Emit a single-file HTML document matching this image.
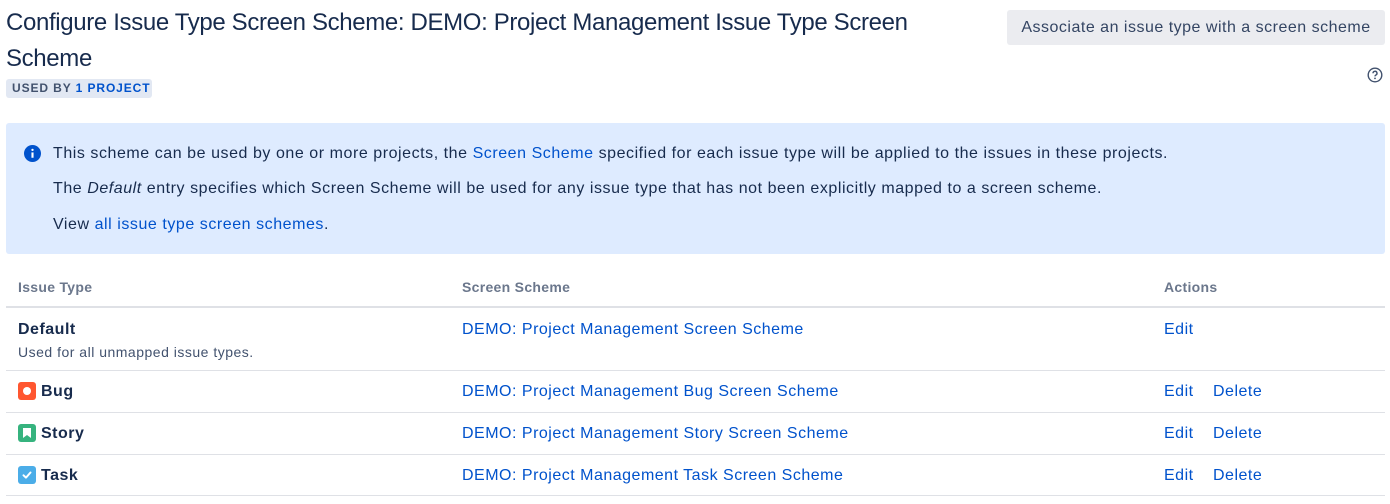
<!DOCTYPE html>
<html><head><meta charset="utf-8"><style>
*{margin:0;padding:0;box-sizing:border-box}
body{width:1390px;height:504px;background:#fff;font-family:"Liberation Sans",Arial,sans-serif;color:#172b4d;position:relative;overflow:hidden;letter-spacing:0.5px}
.a{position:absolute;white-space:nowrap}
a{color:#0052cc;text-decoration:none}
h1{position:absolute;left:6px;top:5px;font-size:24px;font-weight:normal;line-height:36px;color:#172b4d;width:960px;letter-spacing:-0.35px}
.badge{left:6px;top:79px;height:19px;width:146px;background:#e2e8f3;border-radius:3px;font-size:12px;font-weight:bold;color:#42526e;line-height:19px;padding-left:6px;letter-spacing:0.9px}
.btn{left:1007px;top:10px;width:378px;height:35px;background:#ebecf0;border-radius:3px;font-size:16px;line-height:35px;text-align:center;color:#344563}
.info{left:6px;top:123px;width:1379px;height:131px;background:#deebff;border-radius:3px}
.t{font-size:16px;color:#172b4d;letter-spacing:0.55px}
.th{font-size:14px;font-weight:bold;color:#6b778c;top:279px;letter-spacing:0.3px}
.line{position:absolute;left:6px;width:1379px;height:2px;background:#dfe1e6}
.row{font-size:16px}
b{font-weight:bold}
.ic{position:absolute;left:18px;width:18px;height:18px;border-radius:3px}
</style></head><body>
<h1>Configure Issue Type Screen Scheme: DEMO: Project Management Issue Type Screen Scheme</h1>
<div class="a badge">USED BY <span style="color:#0052cc">1 PROJECT</span></div>
<div class="a btn">Associate an issue type with a screen scheme</div>
<svg class="a" style="left:1367px;top:67px" width="16" height="16" viewBox="0 0 16 16"><circle cx="8" cy="8" r="6.8" fill="none" stroke="#42526e" stroke-width="1.4"/><path d="M6 6.3a2 2 0 1 1 2.8 1.8c-.6.3-.8.6-.8 1.3" fill="none" stroke="#42526e" stroke-width="1.4"/><circle cx="8" cy="11.4" r=".9" fill="#42526e"/></svg>
<div class="a info"></div>
<svg class="a" style="left:24px;top:145px" width="17" height="17" viewBox="0 0 16 16"><circle cx="8" cy="8" r="8" fill="#0052cc"/><rect x="7" y="7" width="2" height="5" fill="#fff"/><circle cx="8" cy="4.6" r="1.1" fill="#fff"/></svg>
<div class="a t" style="left:53px;top:145px">This scheme can be used by one or more projects, the <a>Screen Scheme</a> specified for each issue type will be applied to the issues in these projects.</div>
<div class="a t" style="left:53px;top:180px">The <i>Default</i> entry specifies which Screen Scheme will be used for any issue type that has not been explicitly mapped to a screen scheme.</div>
<div class="a t" style="left:53px;top:216px">View <a>all issue type screen schemes</a>.</div>
<div class="a th" style="left:18px">Issue Type</div>
<div class="a th" style="left:462px">Screen Scheme</div>
<div class="a th" style="left:1164px">Actions</div>
<div class="line" style="top:306px"></div>
<div class="a row" style="left:18px;top:321px"><b>Default</b></div>
<div class="a" style="left:18px;top:344px;font-size:14px;color:#42526e">Used for all unmapped issue types.</div>
<div class="a row" style="left:462px;top:321px"><a>DEMO: Project Management Screen Scheme</a></div>
<div class="a row" style="left:1164px;top:321px"><a>Edit</a></div>
<div class="line" style="top:370px;height:1px"></div>
<div class="ic" style="top:382px;background:#ff5630"><div style="position:absolute;left:5px;top:5px;width:8px;height:8px;border-radius:50%;background:#fff"></div></div>
<div class="a row" style="left:41px;top:383px"><b>Bug</b></div>
<div class="a row" style="left:462px;top:383px"><a>DEMO: Project Management Bug Screen Scheme</a></div>
<div class="a row" style="left:1164px;top:383px"><a>Edit</a><a style="position:absolute;left:49px">Delete</a></div>
<div class="line" style="top:412px;height:1px"></div>
<div class="ic" style="top:424px;background:#36b37e"><svg style="position:absolute;left:5px;top:4px" width="8" height="10" viewBox="0 0 8 10"><path d="M0 0H8V10L4 7L0 10Z" fill="#fff"/></svg></div>
<div class="a row" style="left:41px;top:425px"><b>Story</b></div>
<div class="a row" style="left:462px;top:425px"><a>DEMO: Project Management Story Screen Scheme</a></div>
<div class="a row" style="left:1164px;top:425px"><a>Edit</a><a style="position:absolute;left:49px">Delete</a></div>
<div class="line" style="top:454px;height:1px"></div>
<div class="ic" style="top:466px;background:#4bade8"><svg style="position:absolute;left:3px;top:3px" width="12" height="12" viewBox="0 0 12 12"><path d="M2.5 6.3L5 8.6L9.5 3.5" fill="none" stroke="#fff" stroke-width="2" stroke-linecap="round" stroke-linejoin="round"/></svg></div>
<div class="a row" style="left:41px;top:467px"><b>Task</b></div>
<div class="a row" style="left:462px;top:467px"><a>DEMO: Project Management Task Screen Scheme</a></div>
<div class="a row" style="left:1164px;top:467px"><a>Edit</a><a style="position:absolute;left:49px">Delete</a></div>
<div class="line" style="top:495px;height:1px"></div>
</body></html>
